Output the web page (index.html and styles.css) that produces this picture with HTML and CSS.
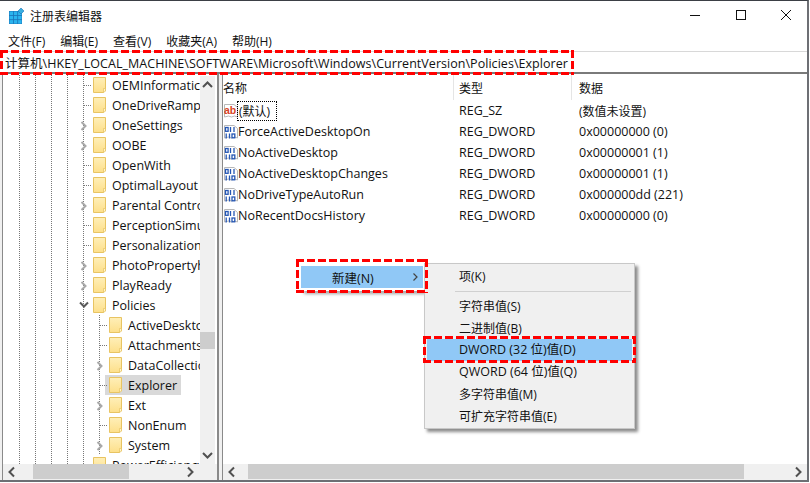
FILE: index.html
```html
<!DOCTYPE html>
<html lang="zh-CN">
<head>
<meta charset="utf-8">
<title>注册表编辑器</title>
<link rel="stylesheet" href="styles.css">
</head>
<body>
<svg class="defs" width="0" height="0" aria-hidden="true">
  <defs>
    <linearGradient id="fg" x1="0" y1="0" x2="0" y2="1">
      <stop offset="0" stop-color="#ffefb8"/>
      <stop offset="1" stop-color="#fddf8a"/>
    </linearGradient>
  </defs>
  <symbol id="folder" viewBox="0 0 13 16">
    <path d="M.5.5h12v13.500h-2v1.500H.5z" fill="url(#fg)" stroke="#e8c462"/>
    <path d="M10.500 11.500v4l2-1.500v-2.500z" fill="#fff3c8" stroke="#e8c462" stroke-width=".7"/>
  </symbol>
  <symbol id="chev-r" viewBox="0 0 8 10"><path d="M1.500 1l4 4-4 4" fill="none" stroke="#a8a8a8" stroke-width="2"/></symbol>
  <symbol id="chev-d" viewBox="0 0 10 8"><path d="M1 1.500l4 4 4-4" fill="none" stroke="#595959" stroke-width="2"/></symbol>
  <symbol id="dword" viewBox="0 0 14 16">
    <path d="M.5 1.500h9.500l3.500 3v9.500l-3-1-3 1-3-1-4 1z" fill="#fff" stroke="#b8b8b8"/>
    <g fill="none" stroke="#2456b4" stroke-width="1.300">
      <rect x="1.500" y="3.500" width="2.600" height="3.800"/>
      <path d="M6.500 3v5"/>
      <path d="M10 3v5"/>
      <path d="M2.200 9.500v5"/>
      <path d="M5.500 9.500v5"/>
      <rect x="8" y="10" width="2.800" height="3.800"/>
    </g>
  </symbol>
</svg>
<div class="window">
  <header class="titlebar">
    <svg class="appicon" width="16" height="16" viewBox="0 0 16 16" aria-hidden="true">
      <rect x="0" y="3" width="13" height="13" fill="#1b74b8"/>
      <g fill="#2bb4ee">
        <rect x=".5" y="3.500" width="3.500" height="3.500"/><rect x="4.800" y="3.500" width="3.500" height="3.500"/><rect x="9.100" y="3.500" width="3.500" height="3.500"/>
        <rect x=".5" y="7.800" width="3.500" height="3.500"/><rect x="4.800" y="7.800" width="3.500" height="3.500"/><rect x="9.100" y="7.800" width="3.500" height="3.500"/>
        <rect x=".5" y="12.100" width="3.500" height="3.500"/><rect x="4.800" y="12.100" width="3.500" height="3.500"/><rect x="9.100" y="12.100" width="3.500" height="3.500"/>
      </g>
      <path d="M12 0l3 3-3 3-3-3z" fill="#39aee0" stroke="#1b74b8" stroke-width=".6"/>
    </svg>
    <span class="title">注册表编辑器</span>
    <div class="caption">
      <svg class="capbtn" width="46" height="29" viewBox="0 0 46 29" aria-hidden="true"><path d="M21 14.500h10" stroke="#111" fill="none"/></svg>
      <svg class="capbtn" width="46" height="29" viewBox="0 0 46 29" aria-hidden="true"><rect x="21.500" y="9.500" width="9" height="9" stroke="#111" fill="none"/></svg>
      <svg class="capbtn" width="46" height="29" viewBox="0 0 46 29" aria-hidden="true"><path d="M20 9l10 10M30 9L20 19" stroke="#111" fill="none"/></svg>
    </div>
  </header>
  <nav class="menubar">
    <span>文件(F)</span><span>编辑(E)</span><span>查看(V)</span><span>收藏夹(A)</span><span>帮助(H)</span>
  </nav>
  <div class="address"><span>计算机\HKEY_LOCAL_MACHINE\SOFTWARE\Microsoft\Windows\CurrentVersion\Policies\Explorer</span></div>
  <main class="panes">
    <section class="tree">
      <div class="tree-view">
        <div class="rows">
          <div class="row lv5 t"><svg class="fold"><use href="#folder"/></svg><span class="lbl">OEMInformatic</span></div>
          <div class="row lv5 t"><svg class="fold"><use href="#folder"/></svg><span class="lbl">OneDriveRamp</span></div>
          <div class="row lv5 e"><svg class="exp"><use href="#chev-r"/></svg><svg class="fold"><use href="#folder"/></svg><span class="lbl">OneSettings</span></div>
          <div class="row lv5 e"><svg class="exp"><use href="#chev-r"/></svg><svg class="fold"><use href="#folder"/></svg><span class="lbl">OOBE</span></div>
          <div class="row lv5 t"><svg class="fold"><use href="#folder"/></svg><span class="lbl">OpenWith</span></div>
          <div class="row lv5 t"><svg class="fold"><use href="#folder"/></svg><span class="lbl">OptimalLayout</span></div>
          <div class="row lv5 e"><svg class="exp"><use href="#chev-r"/></svg><svg class="fold"><use href="#folder"/></svg><span class="lbl">Parental Contro</span></div>
          <div class="row lv5 t"><svg class="fold"><use href="#folder"/></svg><span class="lbl">PerceptionSimu</span></div>
          <div class="row lv5 t"><svg class="fold"><use href="#folder"/></svg><span class="lbl">Personalization</span></div>
          <div class="row lv5 e"><svg class="exp"><use href="#chev-r"/></svg><svg class="fold"><use href="#folder"/></svg><span class="lbl">PhotoPropertyh</span></div>
          <div class="row lv5 e"><svg class="exp"><use href="#chev-r"/></svg><svg class="fold"><use href="#folder"/></svg><span class="lbl">PlayReady</span></div>
          <div class="row lv5 e"><svg class="exp open"><use href="#chev-d"/></svg><svg class="fold"><use href="#folder"/></svg><span class="lbl">Policies</span></div>
          <div class="row lv6 t"><svg class="fold"><use href="#folder"/></svg><span class="lbl">ActiveDesktop</span></div>
          <div class="row lv6 t"><svg class="fold"><use href="#folder"/></svg><span class="lbl">Attachments</span></div>
          <div class="row lv6 e"><svg class="exp"><use href="#chev-r"/></svg><svg class="fold"><use href="#folder"/></svg><span class="lbl">DataCollection</span></div>
          <div class="row lv6 t sel"><svg class="fold"><use href="#folder"/></svg><span class="lbl">Explorer</span></div>
          <div class="row lv6 e"><svg class="exp"><use href="#chev-r"/></svg><svg class="fold"><use href="#folder"/></svg><span class="lbl">Ext</span></div>
          <div class="row lv6 t"><svg class="fold"><use href="#folder"/></svg><span class="lbl">NonEnum</span></div>
          <div class="row lv6 e"><svg class="exp"><use href="#chev-r"/></svg><svg class="fold"><use href="#folder"/></svg><span class="lbl">System</span></div>
          <div class="row lv5 t"><svg class="fold"><use href="#folder"/></svg><span class="lbl">PowerEfficiency</span></div>
        </div>
        <div class="vbar">
          <svg width="17" height="17" viewBox="0 0 17 17" aria-hidden="true"><path d="M4 11l4.500-4.500 4.500 4.500" fill="none" stroke="#505050" stroke-width="2"/></svg>
          <div class="vtrack"><div class="vthumb"></div></div>
          <svg width="17" height="17" viewBox="0 0 17 17" aria-hidden="true"><path d="M4 6l4.500 4.500 4.500-4.500" fill="none" stroke="#505050" stroke-width="2"/></svg>
        </div>
      </div>
      <div class="hbar tree-hbar">
        <svg width="17" height="16" viewBox="0 0 17 16" aria-hidden="true"><path d="M11 3.500l-4.500 4.500 4.500 4.500" fill="none" stroke="#505050" stroke-width="2"/></svg>
        <div class="htrack tree-track"><div class="hthumb"></div></div>
        <svg width="17" height="16" viewBox="0 0 17 16" aria-hidden="true"><path d="M6 3.500l4.500 4.500-4.500 4.500" fill="none" stroke="#505050" stroke-width="2"/></svg>
      </div>
    </section>
    <section class="list">
      <div class="list-view">
        <div class="cols">
          <div class="col c1 cjk">名称</div><div class="col c2 cjk">类型</div><div class="col c3 cjk">数据</div>
        </div>
        <div class="item">
          <div class="c1 name"><svg class="ic" width="14" height="16" viewBox="0 0 14 16" aria-hidden="true"><path d="M.5 1.500h9.500l3.500 3v9.500l-3-1-3 1-3-1-4 1z" fill="#fff" stroke="#b8b8b8"/><text x="0" y="10.500" class="ab">ab</text></svg><span class="focus cjk">(默认)</span></div>
          <div class="c2">REG_SZ</div><div class="c3 cjk">(数值未设置)</div>
        </div>
        <div class="item">
          <div class="c1 name"><svg class="ic" width="14" height="16"><use href="#dword"/></svg><span class="nm">ForceActiveDesktopOn</span></div>
          <div class="c2">REG_DWORD</div><div class="c3">0x00000000 (0)</div>
        </div>
        <div class="item">
          <div class="c1 name"><svg class="ic" width="14" height="16"><use href="#dword"/></svg><span class="nm">NoActiveDesktop</span></div>
          <div class="c2">REG_DWORD</div><div class="c3">0x00000001 (1)</div>
        </div>
        <div class="item">
          <div class="c1 name"><svg class="ic" width="14" height="16"><use href="#dword"/></svg><span class="nm">NoActiveDesktopChanges</span></div>
          <div class="c2">REG_DWORD</div><div class="c3">0x00000001 (1)</div>
        </div>
        <div class="item">
          <div class="c1 name"><svg class="ic" width="14" height="16"><use href="#dword"/></svg><span class="nm">NoDriveTypeAutoRun</span></div>
          <div class="c2">REG_DWORD</div><div class="c3">0x000000dd (221)</div>
        </div>
        <div class="item">
          <div class="c1 name"><svg class="ic" width="14" height="16"><use href="#dword"/></svg><span class="nm">NoRecentDocsHistory</span></div>
          <div class="c2">REG_DWORD</div><div class="c3">0x00000000 (0)</div>
        </div>
      </div>
      <div class="hbar">
        <svg width="17" height="16" viewBox="0 0 17 16" aria-hidden="true"><path d="M11 3.500l-4.500 4.500 4.500 4.500" fill="none" stroke="#505050" stroke-width="2"/></svg>
        <div class="htrack list-track"><div class="hthumb"></div></div>
        <svg width="17" height="16" viewBox="0 0 17 16" aria-hidden="true"><path d="M6 3.500l4.500 4.500-4.500 4.500" fill="none" stroke="#505050" stroke-width="2"/></svg>
      </div>
    </section>
  </main>
</div>

<div class="ctx-parent"><span class="cp-label">新建(N)</span><svg width="8" height="10" viewBox="0 0 8 10" aria-hidden="true"><path d="M1.500 1.500l3.500 3.500-3.500 3.500" fill="none" stroke="#444" stroke-width="1.200"/></svg></div>
<div class="ctx-menu">
  <div class="mi">项(K)</div>
  <div class="sep"></div>
  <div class="mi">字符串值(S)</div>
  <div class="mi">二进制值(B)</div>
  <div class="mi hot">DWORD (32 位)值(D)</div>
  <div class="mi latin">QWORD (64 位)值(Q)</div>
  <div class="mi">多字符串值(M)</div>
  <div class="mi">可扩充字符串值(E)</div>
</div>

<div class="mark m-addr"></div>
<div class="mark m-new"></div>
<div class="mark m-dword"></div>
</body>
</html>
```
FILE: styles.css
```css
* { box-sizing: border-box; }
html, body { margin: 0; height: 100%; }
body {
  width: 810px; height: 483px; overflow: hidden; background: #fff; position: relative;
  font-family: "Open Sans", "Noto Sans CJK SC", sans-serif;
  font-size: 12.500px; color: #111;
}
.defs { position: absolute; }
.cjk { font-size: 12px; }
.window {
  width: 809px; height: 482px; display: flex; flex-direction: column;
  border-top: 1px solid #3b3f45; border-right: 2px solid #6d6f74; border-bottom: 2px solid #6d6f74;
  background: #fff;
}
.titlebar { height: 29px; flex: none; display: flex; align-items: center; padding-left: 9px; }
.appicon { flex: none; }
.title { margin-left: 5px; font-size: 12px; }
.caption { margin-left: auto; display: flex; }
.capbtn { display: block; }
.menubar { height: 21px; flex: none; display: flex; padding-left: 8px; gap: 15px; align-items: center; font-size: 12px; }
.address {
  height: 23px; flex: none; border-top: 1px solid #d8d8d8; border-bottom: 2px solid #7a7a7a;
  display: flex; align-items: center; padding-left: 5px; white-space: nowrap; letter-spacing: .04px;
}
.panes { flex: 1; display: flex; min-height: 0; gap: 3px; background: #f0f0f0; padding-left: 2px; }
.tree { width: 217px; display: flex; flex-direction: column; background: #fff; border-left: 1px solid #8a8a8a; border-right: 2px solid #8a8a8a; }
.list { flex: 1; display: flex; flex-direction: column; background: #fff; border-left: 1px solid #8a8a8a; min-width: 0; }
.tree-view { flex: 1; display: flex; min-height: 0; }
.rows { flex: 1; overflow: hidden; min-width: 0; padding-top: 1px; }
.row {
  height: 20px; position: relative; display: flex; align-items: center; white-space: nowrap;
  background-image:
    linear-gradient(#777 50%, transparent 50%), linear-gradient(#777 50%, transparent 50%),
    linear-gradient(#777 50%, transparent 50%), linear-gradient(#777 50%, transparent 50%),
    linear-gradient(#777 50%, transparent 50%);
  background-size: 1px 2px; background-repeat: repeat-y;
  background-position: 16px 0, 32px 0, 48px 0, 64px 0, 80px 0;
}
.lv5 { padding-left: 88px; }
.lv6 { padding-left: 104px; }
.lv6::before {
  content: ""; position: absolute; left: 96px; top: 0; bottom: 0;
  background-image: linear-gradient(#777 50%, transparent 50%); background-size: 1px 2px; width: 1px;
}
.row.t::after {
  content: ""; position: absolute; top: 10px; width: 7px; height: 1px;
  background-image: linear-gradient(90deg, #777 50%, transparent 50%); background-size: 2px 1px;
}
.lv5.t::after { left: 81px; }
.lv6.t::after { left: 97px; }
.fold { width: 13px; height: 16px; flex: none; margin-left: 2px; }
.exp { position: absolute; width: 8px; height: 10px; top: 6px; }
.lv5 .exp { left: 77px; }
.lv6 .exp { left: 93px; }
.lv5 .exp.open { width: 10px; height: 8px; left: 76px; top: 6px; }
.lbl { margin-left: 6px; }
.sel { background-image:
    linear-gradient(#777 50%, transparent 50%), linear-gradient(#777 50%, transparent 50%),
    linear-gradient(#777 50%, transparent 50%), linear-gradient(#777 50%, transparent 50%),
    linear-gradient(#777 50%, transparent 50%),
    linear-gradient(#d9d9d9, #d9d9d9);
  background-size: 1px 2px, 1px 2px, 1px 2px, 1px 2px, 1px 2px, 76px 20px;
  background-position: 16px 0, 32px 0, 48px 0, 64px 0, 80px 0, 102px 0;
  background-repeat: repeat-y, repeat-y, repeat-y, repeat-y, repeat-y, no-repeat;
}
.vbar { width: 15px; margin: 2px 2px 0 0; background: #f0f0f0; display: flex; flex-direction: column; flex: none; }
.vbar svg { display: block; margin-left: -1px; flex: none; }
.vtrack { flex: 1; padding-top: 239px; }
.vthumb { height: 17px; background: #cdcdcd; }
.hbar { height: 16px; flex: none; display: flex; align-items: flex-start; background: #f0f0f0; }
.tree-hbar { padding-right: 18px; }
.hbar svg { display: block; flex: none; }
.htrack { flex: 1; height: 100%; min-width: 0; }
.hthumb { height: 15px; background: #cdcdcd; }
.tree-track .hthumb { width: 96px; margin-left: 13px; }
.list-track .hthumb { width: 496px; margin-left: 8px; }
.list-view { flex: 1; min-height: 0; }
.cols { display: flex; height: 26px; align-items: stretch; }
.col { border-right: 1px solid #e5e5e5; display: flex; align-items: center; padding-top: 2px; }
.c1 { width: 231px; flex: none; }
.c2 { width: 118px; flex: none; padding-left: 5px; }
.c3 { flex: 1; padding-left: 7px; }
.col.c3 { border-right: none; }
.item { display: flex; height: 21px; align-items: center; white-space: nowrap; }
.name { display: flex; align-items: center; }
.ic { flex: none; margin-left: 1px; }
.ab { font: bold 10.500px "Liberation Sans", sans-serif; fill: #d8431f; }
.focus { margin-left: -1px; border: 1px dotted #000; padding: 0 6px 0 1px; height: 20px; display: flex; align-items: center; }

.ctx-parent {
  position: absolute; left: 301px; top: 266px; width: 122px; height: 22px;
  background: #90c8f6; display: flex; align-items: center; justify-content: space-between; padding: 0 3px 0 31px;
  box-shadow: 0 0 0 3px #fff, 3px 6px 3px rgba(0,0,0,.35);
}
.cp-label { font-size: 12.500px; }
.ctx-menu {
  position: absolute; left: 424px; top: 263px; width: 211px; height: 166px;
  background: #f0f0f0; border: 1px solid #c8c8c8; padding: 1px 2px; box-shadow: 3px 3px 3px rgba(0,0,0,.45);
}
.mi { height: 22px; display: flex; align-items: center; padding: 0 0 1px 32px; font-size: 12px; white-space: nowrap; }
.mi.hot, .mi.latin { font-size: 12.500px; padding-bottom: 3px; }
.sep { height: 1px; margin: 4px 1px 3px 28px; background: #d0d0d0; }
.hot { background: #90c8f6; }

.mark {
  position: absolute; pointer-events: none;
  --d: linear-gradient(90deg, #f00 8px, transparent 8px);
  --v: linear-gradient(#f00 8px, transparent 8px);
  background-image: var(--d), var(--d), var(--v), var(--v);
  background-size: 11px 3px, 11px 3px, 3px 11px, 3px 11px;
  background-repeat: repeat-x, repeat-x, repeat-y, repeat-y;
  background-position: 0 0, 0 100%, 0 0, 100% 0;
}
.m-addr { left: 0; top: 50px; width: 574px; height: 25px; }
.m-new { left: 296px; top: 259px; width: 132px; height: 34px; }
.m-dword { left: 423px; top: 336px; width: 213px; height: 27px; }
```
